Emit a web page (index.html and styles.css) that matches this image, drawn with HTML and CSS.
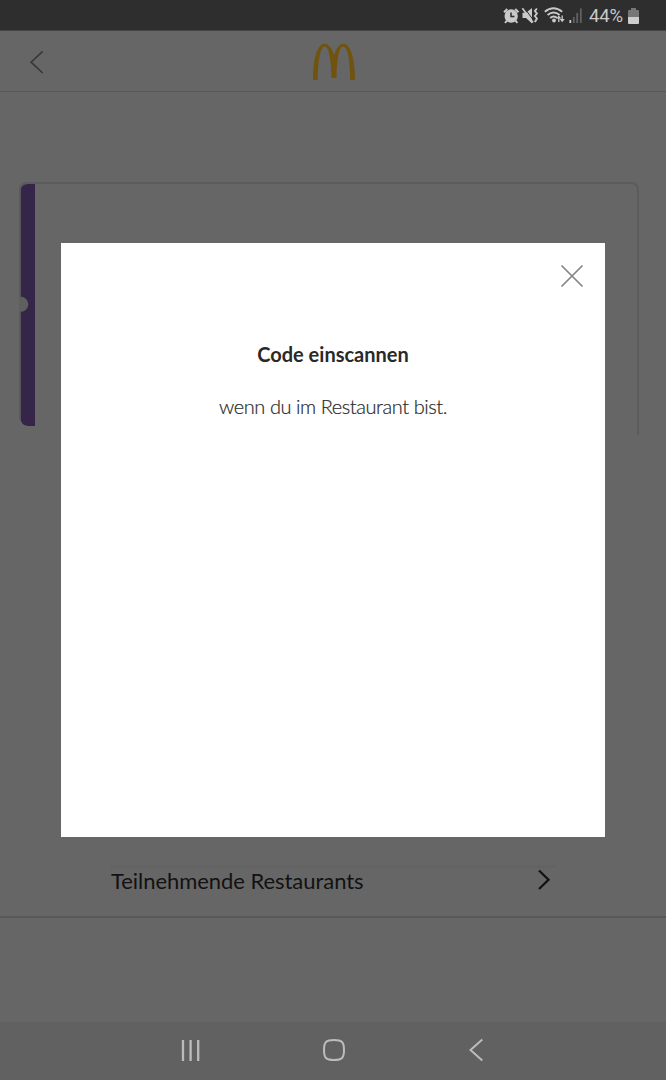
FILE: index.html
```html
<!DOCTYPE html>
<html lang="de">
<head>
<meta charset="utf-8">
<title>Code einscannen</title>
<link rel="stylesheet" href="styles.css">
</head>
<body>
<div class="screen">
  <div class="status">
    <svg class="status-icons" width="82" height="30" viewBox="502 0 82 30" fill="none" stroke="#c9c9c9">
      <circle cx="511.200" cy="16" r="6.700" fill="#c9c9c9" stroke="none"/>
      <path d="M504 12.200l3.300-3.200M515.200 9l3.300 3.200M507 20.600l-2 2.200M515.400 20.600l2 2.200" stroke-width="2"/>
      <path d="M511 12.500v4h3.400" stroke="#2e2e2e" stroke-width="1.500"/>
      <path d="M522.500 12.800h3.500l6-4.800v15.500l-6-5.500h-3.500z" fill="#c9c9c9" stroke="none"/>
      <path d="M524 7.500l10 13.500" stroke="#2e2e2e" stroke-width="1"/>
      <path d="M522.400 8.200l10.600 14.300" stroke-width="1.700"/>
      <path d="M536.900 8.500l-2 2.500 2 2.500-2 2.500 2 2.500-2 3.500" stroke-width="1.900"/>
      <path d="M544.800 11.800q8.700-7 17.400 0M547.600 15q6-5 12 0M550.200 18q3.500-3 7 0" stroke-width="1.900"/>
      <circle cx="554" cy="20.500" r="1.900" fill="#c9c9c9" stroke="none"/>
      <path d="M556.300 18.500l2.500-3 2.500 3zM559.700 19l2.500 3.200 2.500-3.200z" fill="#c9c9c9" stroke="none"/>
      <path d="M558.800 17v5M562.200 15.500v5" stroke-width="1.300"/>
      <path d="M570.300 20v3" stroke-width="1.800"/>
      <path d="M573.800 17v6M577.200 13v10M580.800 8.500v14.500" stroke="#626262" stroke-width="1.800"/>
    </svg>
    <span class="battery-text">44%</span>
    <svg class="battery" width="11" height="17" viewBox="0 0 11 17">
      <path d="M3 0h5v2h2q1 0 1 1v6H0V3q0-1 1-1h2z" fill="#777"/>
      <path d="M0 9h11v6q0 1-1 1H1q-1 0-1-1z" fill="#cdcdcd"/>
    </svg>
  </div>

  <header class="header">
    <svg class="back" width="16" height="26" viewBox="0 0 16 26" fill="none" stroke="#393939" stroke-width="1.700"><path d="M13.700 2.300L2.100 13.200L13.700 24"/></svg>
    <svg class="logo" width="44" height="38" viewBox="312 43 44 38" fill="#70530f">
      <path d="M313 80C313 60 317 43.700 324.400 43.700C328.700 43.700 332 48.500 334 55C336 48.500 339.300 43.700 343.600 43.700C351 43.700 355 60 355 80H350.200C350.200 62 347.800 46.600 343.200 46.600C339 46.600 336.600 61 336.600 78H331.400C331.400 61 329 46.600 324.800 46.600C320.200 46.600 317.800 62 317.800 80Z"/>
    </svg>
  </header>

  <main class="content">
    <svg class="coupon" width="620" height="254" viewBox="19 182 620 254">
      <path d="M20 420V190Q20 183 27 183H631Q638 183 638 190V435" fill="none" stroke="#5c5c5c" stroke-width="2"/>
      <path d="M35 184V426H28Q20.500 425 20.500 418V191Q21 184 28 184Z" fill="#342549"/>
      <path d="M20 189V420" stroke="#5b5b5f" stroke-width="1.500"/>
      <path d="M19 296.800H21A7.200 7.400 0 0 1 21 311.800H19Z" fill="#5f5f5f"/>
    </svg>
  </main>

  <section class="restaurants">
    <div class="restaurant-link">
      <span class="restaurant-label">Teilnehmende Restaurants</span>
      <svg class="chevron" width="14" height="22" viewBox="0 0 14 22" fill="none" stroke="#111" stroke-width="2.200"><path d="M2 1.500L11.500 10.700L2 20"/></svg>
    </div>
  </section>

  <nav class="navbar">
    <svg width="666" height="58" viewBox="0 1022 666 58" fill="none" stroke="#bcbcbc" stroke-width="2">
      <path d="M183 1040v21M190.600 1040v21M198.200 1040v21" stroke-width="2.300"/>
      <path d="M334 1040C342 1040 344 1042 344 1050S342 1060 334 1060S324 1058 324 1050S326 1040 334 1040Z"/>
      <path d="M482.300 1039.500L470.500 1050L482.300 1060.500"/>
    </svg>
  </nav>

  <div class="dialog">
    <svg class="close" width="24" height="24" viewBox="0 0 24 24" stroke="#858585" stroke-width="1.700"><path d="M1.500 1.500L22.500 22.500M22.500 1.500L1.500 22.500"/></svg>
    <h1 class="dialog-title">Code einscannen</h1>
    <p class="dialog-text">wenn du im Restaurant bist.</p>
  </div>
</div>
</body>
</html>
```
FILE: styles.css
```css
* { box-sizing: border-box; }
body { margin: 0; background: #666; font-family: Lato, "Open Sans", sans-serif; }
svg { display: block; flex: none; }
.screen { position: relative; width: 666px; height: 1080px; overflow: hidden; display: flex; flex-direction: column; background: #666; }
.status { height: 31px; flex: none; display: flex; align-items: flex-start; padding-left: 502px; background: #2e2e2e; border-bottom: 1px solid #454545; }
.battery-text { margin-left: 5px; width: 35px; font: 18.5px/33px Roboto, sans-serif; letter-spacing: -0.1px; color: #c9c9c9; }
.battery { margin: 8px 0 0 4px; }
.header { height: 61px; flex: none; display: flex; align-items: flex-start; border-bottom: 1px solid #585858; }
.back { margin: 18px 0 0 29px; }
.logo { margin: 12px 0 0 267px; }
.content { height: 773px; flex: none; padding: 90px 0 0 19px; }
.restaurants { height: 53px; flex: none; padding: 0 111px 0 110px; border-bottom: 2px solid #585858; }
.restaurant-link { height: 34px; display: flex; justify-content: space-between; border-top: 3px solid #636363; padding: 0 4px 0 1px; }
.restaurant-label { font-size: 22px; line-height: 26px; letter-spacing: -0.05px; color: #121212; white-space: nowrap; }
.chevron { margin-top: 1px; }
.navbar { height: 58px; flex: none; margin-top: auto; background: #616161; }
.dialog { position: absolute; left: 61px; top: 243px; width: 544px; height: 594px; background: #fff; display: flex; flex-direction: column; align-items: center; text-align: center; color: #292929; }
.close { align-self: flex-end; margin: 21px 21px 0 0; }
.dialog-title { margin: 53px 0 0; font-size: 20px; line-height: 26px; font-weight: 700; white-space: nowrap; }
.dialog-text { margin: 26px 0 0; font-size: 20px; line-height: 26px; font-weight: 300; letter-spacing: -0.43px; -webkit-text-stroke: 0.2px #292929; white-space: nowrap; }
```
